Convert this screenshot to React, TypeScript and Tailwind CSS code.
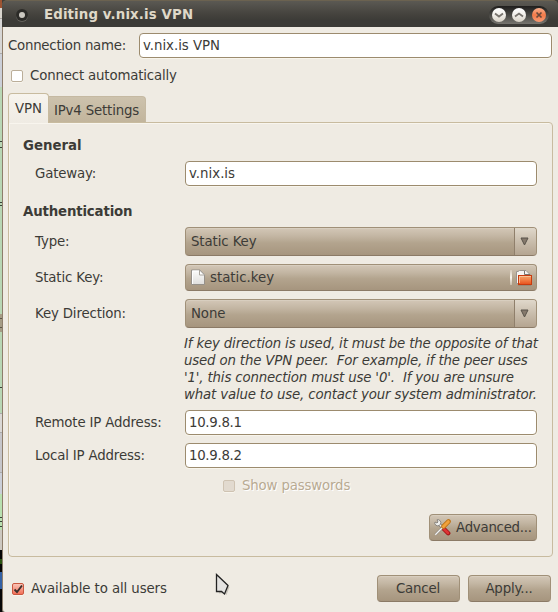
import type { ReactNode } from 'react';

const fieldBox = 'rounded-[4px] border border-[#9c8b6e] bg-white shadow-[0_1px_0_#f8f5ec,1px_0_0_#f4f0e6]';
const buttonBox =
  'rounded-[4px] border border-[#a09078] border-b-[#8b7a66] bg-[linear-gradient(to_bottom,#d3c7b7_0%,#c3b6a3_30%,#b3a48e_55%,#a6957e_100%)] shadow-[inset_0_1px_0_#d8cebf]';

function Field({ value, className = 'tracking-[-0.2px]' }: { value: string; className?: string }) {
  return <div className={`flex h-[25px] items-center pl-[3px] ${fieldBox} ${className}`}>{value}</div>;
}

function Row({ label, children, className = '' }: { label: string; children: ReactNode; className?: string }) {
  return (
    <div className={`flex items-center pl-[26px] pr-[15px] ${className}`}>
      <div className="w-[150px] shrink-0">{label}</div>
      <div className="w-[352px]">{children}</div>
    </div>
  );
}

function Combo({ value }: { value: string }) {
  return (
    <div className={`flex h-[29px] overflow-hidden ${buttonBox}`}>
      <div className="flex flex-1 items-center pl-[5px] tracking-[-0.1px]">{value}</div>
      <div className="flex w-[22px] items-center justify-center border-l border-[#8f7f6b] bg-[linear-gradient(to_bottom,#e0d8cb,#c9bdac_50%,#b5a591)] pr-[2px]">
        <svg width="9" height="9" viewBox="0 0 9 9">
          <path d="M1 1h7L4.5 8z" fill="#85796c" stroke="#59534a" strokeWidth="1" />
        </svg>
      </div>
    </div>
  );
}

function PageIcon() {
  return (
    <svg width="14" height="17" viewBox="0 0 14 17">
      <defs>
        <linearGradient id="page" x1="0" y1="0" x2="0" y2="1">
          <stop offset="0" stopColor="#fcfcfb" />
          <stop offset="1" stopColor="#dfdedc" />
        </linearGradient>
      </defs>
      <path d="M.5 1h8.5l4.5 4.5v10H.5z" fill="url(#page)" stroke="#96918a" />
      <path d="M1.5 15V2H8.5" fill="none" stroke="#fff" />
      <path d="M8.5 1v5h5z" fill="#fff" stroke="#aaa69f" />
    </svg>
  );
}

function FolderIcon() {
  return (
    <svg width="17" height="16" viewBox="0 0 17 16">
      <defs>
        <linearGradient id="folder" x1="0" y1="0" x2="0" y2="1">
          <stop offset="0" stopColor="#f4a76c" />
          <stop offset=".45" stopColor="#f2834a" />
          <stop offset="1" stopColor="#e8501a" />
        </linearGradient>
      </defs>
      <path d="M.5 13.500V1.500H2L3.500.5H10l4 4V8H3v5.500z" fill="#f5f4f2" stroke="#9a958e" />
      <path d="M8.500 1v3.500H14" fill="none" stroke="#77736e" />
      <path d="M2 15h13" stroke="#7b6656" strokeOpacity=".6" />
      <rect x="2.500" y="5.500" width="13" height="9" fill="url(#folder)" stroke="#c93b0e" />
      <path d="M3.500 13V6.500H15" fill="none" stroke="#f8c8a0" strokeOpacity=".8" />
    </svg>
  );
}

function ToolsIcon() {
  return (
    <svg width="17" height="17" viewBox="0 0 17 17">
      <path d="M9 9l5.200 5.200" stroke="#9e1414" strokeWidth="4.400" strokeLinecap="round" />
      <path d="M9 9l5 5" stroke="#dd3434" strokeWidth="2.800" strokeLinecap="round" />
      <path d="M4.500 4.500l4.500 4.500" stroke="#77736f" strokeWidth="3" />
      <path d="M4.300 4.300l4.600 4.600" stroke="#eeeeec" strokeWidth="1.600" />
      <path d="M3 .8a3 3 0 0 1 3.500 4.200A3 3 0 0 1 .8 4.500L1 3l2 1 1-1z" fill="#eeeeec" stroke="#77736f" strokeWidth=".8" />
      <path d="M1.500 15.500l7-7" stroke="#817b75" strokeWidth="2.400" />
      <path d="M1.300 15.700l7.200-7.200" stroke="#f3f3f2" strokeWidth="1.400" />
      <path d="M9.500 7.500l5-5" stroke="#bd7418" strokeWidth="4.600" strokeLinecap="round" />
      <path d="M9.500 7.500l4.800-4.800" stroke="#f0a13b" strokeWidth="3" strokeLinecap="round" />
    </svg>
  );
}

function WindowButton({ kind }: { kind: 'down' | 'up' | 'close' }) {
  const close = kind === 'close';
  const glyph = kind === 'down' ? 'M3 5.500L7 8.500L11 5.500' : kind === 'up' ? 'M3 8.500L7 5.500L11 8.500' : 'M4.500 4.500l5 5M9.500 4.500l-5 5';
  return (
    <svg width="14" height="14" viewBox="0 0 14 14">
      <defs>
        <linearGradient id={`orb-${kind}`} x1="0" y1="0" x2="0" y2="1">
          <stop offset="0" stopColor={close ? '#f9b08d' : '#ffffff'} />
          <stop offset=".5" stopColor={close ? '#f27a49' : '#f1eee9'} />
          <stop offset="1" stopColor={close ? '#f89a73' : '#d8d2c6'} />
        </linearGradient>
      </defs>
      <circle cx="7" cy="7" r="7" fill={`url(#orb-${kind})`} />
      <path d={glyph} fill="none" stroke={close ? '#69483a' : '#77736d'} strokeWidth={close ? 1.7 : 1.8} />
    </svg>
  );
}

// Slice of the window lying behind this one, visible along the left edge.
function Backdrop() {
  return (
    <div className="flex w-[2px] shrink-0 flex-col">
      <div className="h-[8px] bg-[#9e5432]" />
      <div className="h-[10px] bg-[#d9d5ce]" />
      <div className="h-px bg-[#a9a5a0]" />
      <div className="h-[34px] bg-[#d7d6d5]" />
      <div className="h-px bg-[#aaa]" />
      <div className="h-[33px] bg-[#cbcfd8]" />
      <div className="h-[54px] bg-[#b9d7b5]" />
      <div className="h-px bg-[#384338]" />
      <div className="h-[5px] bg-[#b9d7b5]" />
      <div className="h-px bg-[#384338]" />
      <div className="h-[54px] bg-[#b9d7b5]" />
      <div className="h-px bg-[#384338]" />
      <div className="h-[2px] bg-[#b9d7b5]" />
      <div className="h-px bg-[#384338]" />
      <div className="h-[108px] bg-[#b9d7b5]" />
      <div className="h-[4px] bg-[#a69d86]" />
      <div className="h-px bg-[#5d5748]" />
      <div className="h-[8px] bg-[#a69d86]" />
      <div className="h-px bg-[#5d5748]" />
      <div className="h-[4px] bg-[#a69d86]" />
      <div className="h-[55px] bg-[#b9d7b5]" />
      <div className="h-px bg-[#384338]" />
      <div className="h-[25px] bg-[#b9d7b5]" />
      <div className="h-px bg-[#aaa]" />
      <div className="h-[18px] bg-[#dad8d5]" />
      <div className="h-px bg-[#aaa]" />
      <div className="h-[39px] bg-[#c6c6ca]" />
      <div className="h-px bg-[#aaa]" />
      <div className="h-[21px] bg-[#cbcfd8]" />
      <div className="h-[23px] bg-[#b9e0b0]" />
      <div className="h-px bg-[#384338]" />
      <div className="h-[3px] bg-[#b9e0b0]" />
      <div className="h-px bg-[#384338]" />
      <div className="h-[4px] bg-[#b9e0b0]" />
      <div className="h-px bg-[#384338]" />
      <div className="h-[3px] bg-[#b9e0b0]" />
      <div className="h-[20px] bg-[#cdc8c0]" />
      <div className="h-[9px] bg-[#050505]" />
      <div className="h-[5px] bg-[#2b5512]" />
      <div className="h-[8px] bg-[#050505]" />
      <div className="h-[17px] bg-[#3461a4]" />
      <div className="flex-1 bg-[#080808]" />
    </div>
  );
}

function Check({ checked = false, disabled = false }: { checked?: boolean; disabled?: boolean }) {
  const tone = checked
    ? 'border-[#c9573f] bg-[linear-gradient(to_bottom,#f9c3b5,#f27059)]'
    : disabled
      ? 'border-[#cfc3b2] bg-[#e2dacf]'
      : 'border-[#bbae99] bg-white';
  return (
    <div className={`h-[12px] w-[12px] shrink-0 rounded-[2px] border shadow-[0_1px_0_#f8f5ee] ${tone}`}>
      {checked && (
        <svg width="10" height="10" viewBox="0 0 10 10">
          <path d="M1.500 5.500L4 8L9 1.500" fill="none" stroke="#3b302c" strokeWidth="1.900" />
        </svg>
      )}
    </div>
  );
}

export default function App() {
  return (
    <div className="relative flex h-[612px] w-[558px] overflow-hidden bg-[#403e39] font-['DejaVu_Sans',sans-serif] text-[13.33px] leading-[17px] tracking-[-0.16px] text-[#3c3b37]">
      <Backdrop />
      <div className="flex flex-1 flex-col">
        <div className="flex h-[27px] shrink-0 items-center rounded-t-[5px] border-t border-[#6b6250] bg-[linear-gradient(to_bottom,#5b5953,#45433e_50%,#3c3b37_75%)] pl-[14px] pr-[9px]">
          <div className="mt-px flex h-[12px] w-[12px] items-center justify-center rounded-full bg-[#2c2b28] shadow-[0_1px_0_#65635d]">
            <div className="h-[6px] w-[6px] rounded-full bg-[#cbc8c1]" />
          </div>
          <div className="flex-1 pl-[16px] font-bold tracking-[0.13px] text-[#dfd8c8]">Editing v.nix.is VPN</div>
          <div className="mt-[2px] flex h-[18px] w-[60px] items-center justify-between rounded-full bg-[linear-gradient(to_bottom,#1f1e1c,#494844_50%,#77756f)] px-[3px]">
            <WindowButton kind="down" />
            <WindowButton kind="up" />
            <WindowButton kind="close" />
          </div>
        </div>

        <div className="flex flex-1 flex-col rounded-bl-[3px] border-l border-[#8e7e6c] bg-[#efebe3] pl-[5px] pr-[5px] pt-[6px]">
          <div className="flex items-center pr-px">
            <div className="w-[131px] shrink-0 tracking-[-0.25px]">Connection name:</div>
            <Field value="v.nix.is VPN" className="flex-1 tracking-[-0.03px]" />
          </div>
          <div className="mt-[9px] flex h-[17px] items-center gap-[7px] pl-[3px]">
            <Check />
            <span>Connect automatically</span>
          </div>

          <div className="mt-[9px] flex h-[29px] items-end">
            <div className="z-10 mb-[-1px] flex h-[30px] w-[41px] items-center justify-center rounded-t-[4px] border border-b-0 border-[#c8bb9f] bg-[linear-gradient(to_bottom,#f7f4ee,#efebe3)] tracking-normal">
              VPN
            </div>
            <div className="flex h-[26px] w-[97px] items-center justify-center rounded-tr-[4px] border border-b-0 border-l-0 border-[#c5b9a2] bg-[linear-gradient(to_bottom,#cdc2ad,#c2b59c)] pr-px pt-[2px]">
              IPv4 Settings
            </div>
          </div>

          <div className="flex h-[435px] w-[545px] flex-col rounded-[4px] rounded-tl-none border border-[#c8bb9f] bg-[#efebe3] pt-[14px] shadow-[inset_1px_1px_0_#f8f5ee]">
            <div className="pl-[14px] font-bold tracking-normal">General</div>
            <Row label="Gateway:" className="mt-[7px]">
              <Field value="v.nix.is" className="tracking-normal" />
            </Row>
            <div className="mt-[17px] pl-[14px] font-bold">Authentication</div>
            <Row label="Type:" className="mt-[7px]">
              <Combo value="Static Key" />
            </Row>
            <Row label="Static Key:" className="mt-[8px]">
              <div className={`flex h-[27px] items-center pl-[5px] pr-[3px] ${buttonBox}`}>
                <PageIcon />
                <span className="flex-1 pl-[5px] tracking-normal">static.key</span>
                <div className="mr-[4px] h-[15px] w-[2px] bg-[linear-gradient(to_bottom,#d5cabb,#f8f4ec_50%,#c8bba8)]" />
                <FolderIcon />
              </div>
            </Row>
            <Row label="Key Direction:" className="mt-[8px]">
              <Combo value="None" />
            </Row>
            <div className="mt-[7px] whitespace-pre pl-[175px] italic">
              <div>If key direction is used, it must be the opposite of that</div>
              <div>used on the VPN peer.  For example, if the peer uses</div>
              <div>'1', this connection must use '0'.  If you are unsure</div>
              <div>what value to use, contact your system administrator.</div>
            </div>
            <Row label="Remote IP Address:" className="mt-[7px]">
              <Field value="10.9.8.1" className="tracking-[-0.3px]" />
            </Row>
            <Row label="Local IP Address:" className="mt-[8px]">
              <Field value="10.9.8.2" className="tracking-[-0.3px]" />
            </Row>
            <div className="mt-[9px] flex h-[17px] items-center gap-[7px] pl-[214px] text-[#b8aa92] [text-shadow:1px_1px_0_#fff]">
              <Check disabled />
              <span>Show passwords</span>
            </div>
            <div className={`mt-[20px] mr-[15px] flex h-[27px] w-[108px] items-center gap-[5px] self-end pl-[4px] ${buttonBox}`}>
              <ToolsIcon />
              <span className="tracking-[-0.25px]">Advanced...</span>
            </div>
          </div>

          <div className="mt-[18px] flex h-[27px] items-center pl-[4px] pr-[2px]">
            <Check checked />
            <span className="flex-1 pl-[7px] tracking-[-0.1px]">Available to all users</span>
            <div className={`flex h-[27px] w-[83px] items-center justify-center pr-px ${buttonBox}`}>Cancel</div>
            <div className={`ml-[8px] flex h-[27px] w-[83px] items-center justify-center pr-px ${buttonBox}`}>Apply...</div>
          </div>
        </div>
      </div>

      <svg className="absolute left-[215px] top-[573px]" width="16" height="24" viewBox="0 0 16 24">
        <path d="M2.500 3l12 11-3 8-2.500-2-5 .5z" fill="#8b867e" fillOpacity=".4" />
        <path d="M1.500 1.500L13 12.500L9.500 21L6.500 18.500L1.500 18.500z" fill="#e4e3e1" stroke="#222" strokeWidth="1.300" />
      </svg>
    </div>
  );
}
